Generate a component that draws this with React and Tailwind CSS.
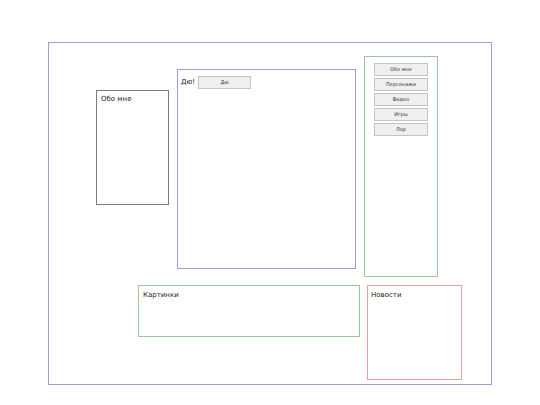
export default function App() {
  const nav = ["Обо мне", "Персонажи", "Видео", "Игры", "Лор"];
  return (
    <div className="w-[540px] h-[405px] bg-white pt-[42px] pl-[48px]" style={{ fontFamily: '"DejaVu Sans", sans-serif' }}>
      <div className="w-[444px] h-[343px] border border-[#a09cd8] flex flex-col">
        <div className="flex items-start">
          <div className="ml-[47px] mt-[47px] w-[73px] h-[115px] border border-[#7c7c7c] pl-[4px] pt-[3px] text-[7px] text-[#222] leading-[10px]">
            Обо мне
          </div>
          <div className="ml-[8px] mt-[26px] w-[179px] h-[200px] border border-[#a09cd8] pl-[3px] pt-[6px]">
            <div className="flex items-center gap-[3px] text-[7px] text-[#222]">
              <span>Дю!</span>
              <div className="w-[53px] h-[13px] bg-[#efefef] border border-[#c4c4c4] flex items-center justify-center text-[5px] text-[#333]">
                Дю
              </div>
            </div>
          </div>
          <div className="ml-[8px] mt-[13px] w-[74px] h-[221px] border border-[#9cc89c] pl-[9px] pt-[6px] flex flex-col gap-[2px]">
            {nav.map((n) => (
              <div key={n} className="w-[54px] h-[13px] bg-[#efefef] border border-[#c4c4c4] flex items-center justify-center text-[5px] text-[#333]">
                {n}
              </div>
            ))}
          </div>
        </div>
        <div className="flex items-start mt-[8px]">
          <div className="ml-[89px] w-[222px] h-[52px] border border-[#9cc89c] pl-[4px] pt-[4px] text-[7px] text-[#222] leading-[10px]">
            Картинки
          </div>
          <div className="ml-[7px] w-[95px] h-[95px] border border-[#e8a0a0] pl-[3px] pt-[4px] text-[7px] text-[#222] leading-[10px]">
            Новости
          </div>
        </div>
      </div>
    </div>
  );
}
